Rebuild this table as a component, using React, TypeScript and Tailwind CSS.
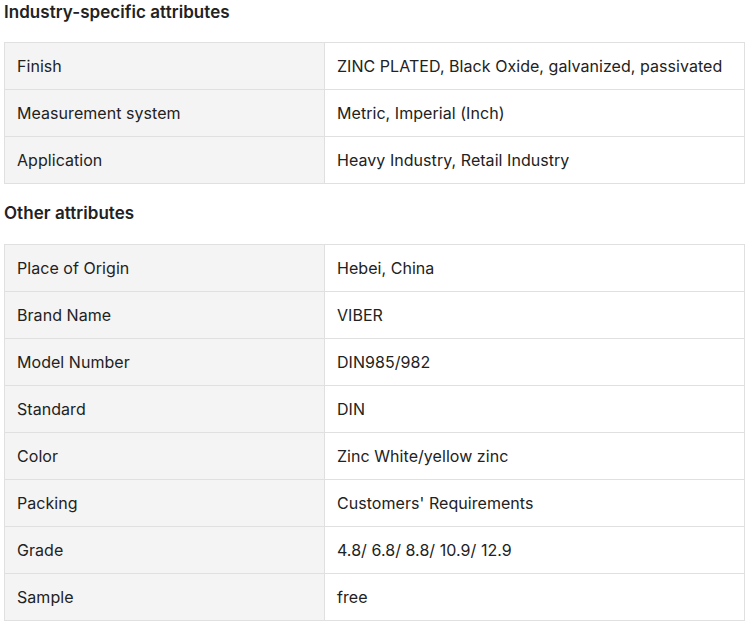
const industry: [string, string][] = [
  ["Finish", "ZINC PLATED, Black Oxide, galvanized, passivated"],
  ["Measurement system", "Metric, Imperial (Inch)"],
  ["Application", "Heavy Industry, Retail Industry"],
]

const other: [string, string][] = [
  ["Place of Origin", "Hebei, China"],
  ["Brand Name", "VIBER"],
  ["Model Number", "DIN985/982"],
  ["Standard", "DIN"],
  ["Color", "Zinc White/yellow zinc"],
  ["Packing", "Customers' Requirements"],
  ["Grade", "4.8/ 6.8/ 8.8/ 10.9/ 12.9"],
  ["Sample", "free"],
]

function AttrTable({ rows }: { rows: [string, string][] }) {
  return (
    <div className="w-[741px] border-t border-l border-[#e0e0e0]">
      {rows.map(([k, v]) => (
        <div key={k} className="grid h-[47px] grid-cols-[320px_1fr] border-b border-r border-[#e0e0e0]">
          <div className="flex items-center border-r border-[#e0e0e0] bg-[#f4f4f4] px-3 text-[#222]">{k}</div>
          <div className="flex items-center bg-white px-3 text-[#222]">{v}</div>
        </div>
      ))}
    </div>
  )
}

export default function App() {
  return (
    <div className="h-[625px] w-[755px] bg-white pl-1 font-['Inter',sans-serif] text-[16px] tracking-[0.05px]">
      <h3 className="text-[17px] leading-[24px] font-semibold text-[#222]">Industry-specific attributes</h3>
      <div className="mt-[18px]">
        <AttrTable rows={industry} />
      </div>
      <h3 className="mt-[17px] text-[17px] leading-[24px] font-semibold text-[#222]">Other attributes</h3>
      <div className="mt-[19px]">
        <AttrTable rows={other} />
      </div>
    </div>
  )
}
